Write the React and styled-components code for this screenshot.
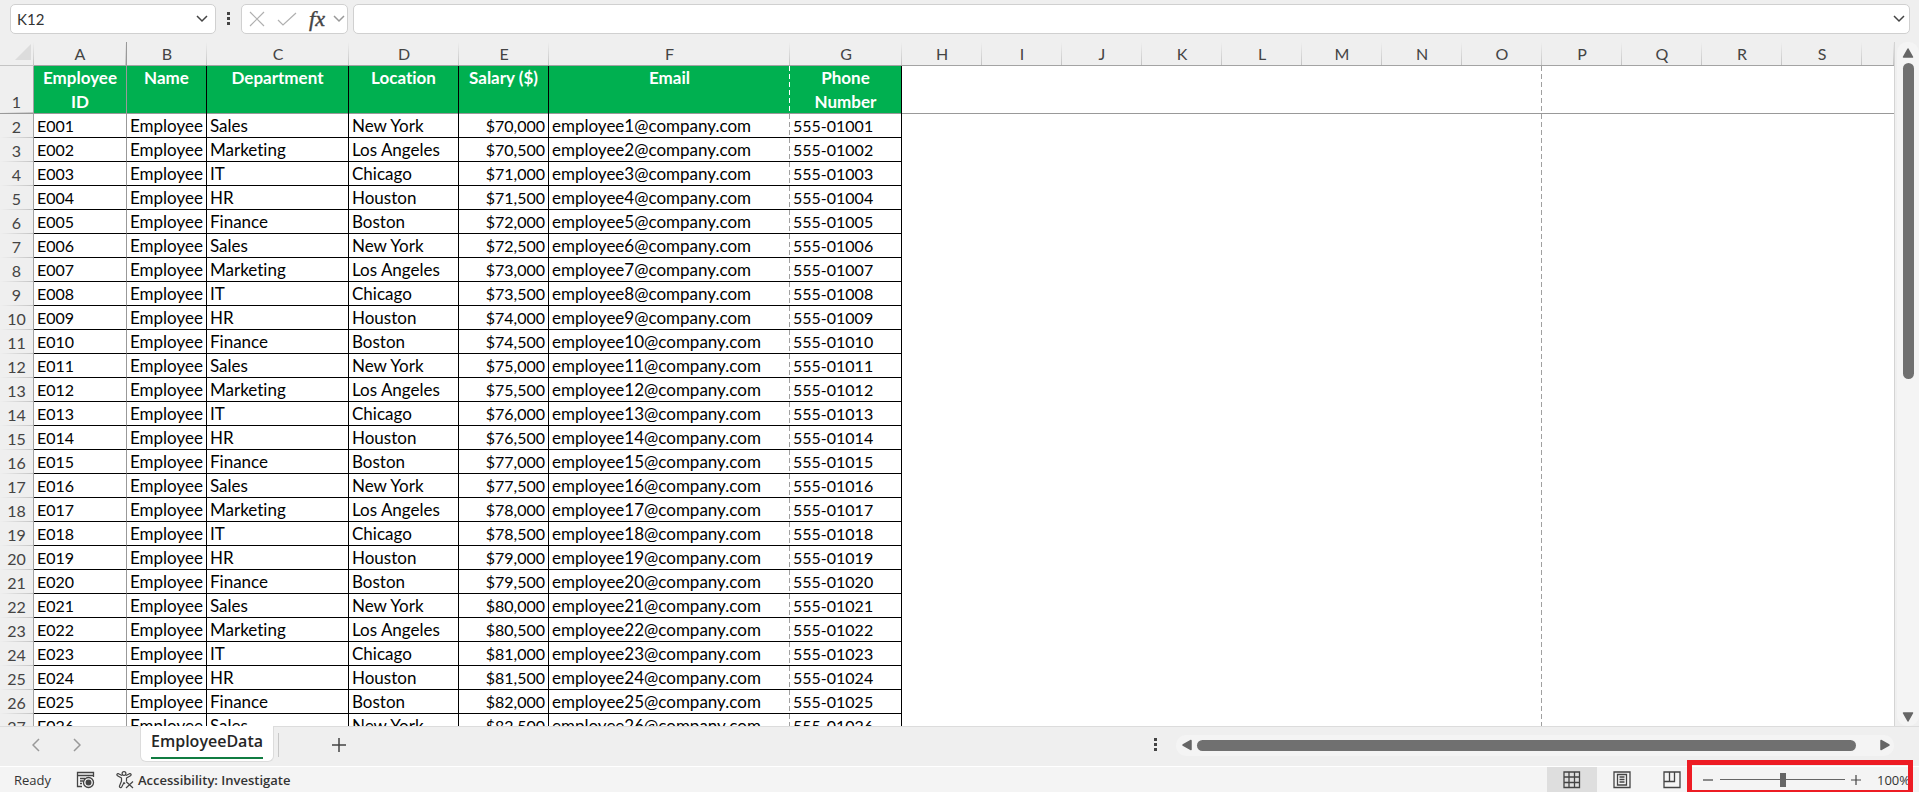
import React from "react";
import styled, { createGlobalStyle, css } from "styled-components";

const GRID_FONT = 'Lato, "Liberation Sans", sans-serif';
const UI_FONT = '"Open Sans", "Noto Sans", sans-serif';

const GlobalStyle = createGlobalStyle`
  * { box-sizing: border-box; }
  body { margin: 0; background: #efefef; font-family: ${UI_FONT}; }
  button { border: 0; padding: 0; background: none; color: inherit; font: inherit; }
`;

const Workbook = styled.div`
  display: flex;
  flex-direction: column;
  height: 100vh;
  overflow: hidden;
  background: #efefef;
`;

/* ---------- formula bar ---------- */

const FormulaBar = styled.header`
  display: flex;
  align-items: center;
  height: 42px;
  padding: 4px 9px 8px 10px;
`;

const field = css`
  display: flex;
  align-items: center;
  height: 30px;
  border: 1px solid #d0d0d0;
  border-radius: 5px;
  background: #fff;
`;

const NameBox = styled.div`
  ${field}
  width: 206px;
  padding-right: 6px;
`;

const NameInput = styled.input`
  flex: 1;
  min-width: 0;
  padding: 0 6px;
  border: 0;
  background: none;
  outline: none;
  color: #333;
  font: 15px ${GRID_FONT};
`;

const IconButton = styled.button`
  display: flex;
  align-items: center;
  justify-content: center;
  flex: none;
  width: ${(p) => p.$w || 20}px;
  height: ${(p) => p.$h || 24}px;
  color: ${(p) => p.$color || "#444"};
`;

const FormulaActions = styled.div`
  ${field}
  width: 107px;
  margin-right: 5px;
`;

const FormulaField = styled.div`
  ${field}
  flex: 1;
`;

/* ---------- sheet ---------- */

const SheetArea = styled.main`
  display: flex;
  flex: 1;
  min-height: 0;
`;

const SheetView = styled.div`
  flex: 1;
  min-width: 0;
  overflow: hidden;
  border-right: 1px solid #d4d4d4;
  background: #fff;
`;

const Grid = styled.table`
  width: 100%;
  table-layout: fixed;
  border-collapse: separate;
  border-spacing: 0;
  color: #000;
  font: 16px/23px ${GRID_FONT};
  font-variant-ligatures: none;
`;

const separator = (dir) => css`
  background: linear-gradient(${dir}, #efefef, #c4c4c4) right bottom /
    ${dir === "to bottom" ? "1px 100%" : "100% 1px"} no-repeat #efefef;
`;

const ColumnHeader = styled.th`
  height: 24px;
  padding: 0;
  border-bottom: 1px solid #a3a3a3;
  color: #444;
  font-weight: 400;
  line-height: 23px;
  ${separator("to bottom")}
  ${(p) => p.$frozen && css`border-right: 1px solid #999;`}
`;

const Corner = styled.td`
  height: 24px;
  padding: 0 3px 3px 0;
  border-bottom: 1px solid #c4c4c4;
  ${separator("to bottom")}
  svg { display: block; margin-left: auto; }
`;

const RowHeader = styled.th`
  height: ${(p) => (p.$first ? 48 : 24)}px;
  padding: 0;
  border-right: 1px solid #a3a3a3;
  color: #444;
  font-weight: 400;
  vertical-align: bottom;
  ${separator("to right")}
  ${(p) => p.$first && css`border-bottom: 1px solid #999;`}
`;

const pageBreak = (color) => css`
  border-right: 0;
  background-image: repeating-linear-gradient(
    to bottom, ${color} 0, ${color} 5px, transparent 5px, transparent 8px
  );
  background-position: right top;
  background-size: 1px 100%;
  background-repeat: no-repeat;
`;

const TitleCell = styled.th`
  height: 48px;
  padding: 0 4px;
  border-right: 1px solid ${(p) => (p.$frozen ? "#999" : "#000")};
  box-shadow: inset 0 -1px #999;
  background-color: #00b050;
  color: #fff;
  font-size: 17px;
  font-weight: 700;
  line-height: 24px;
  vertical-align: top;
  ${(p) => p.$pageBreak && pageBreak("#fff")}
`;

const DataCell = styled.td`
  height: 24px;
  padding: 0 3px;
  overflow: hidden;
  border-right: 1px solid ${(p) => (p.$frozen ? "#999" : "#000")};
  border-bottom: 1px solid #000;
  font-size: ${(p) => (p.$numeric ? 16 : 17)}px;
  text-align: ${(p) => (p.$right ? "right" : "left")};
  white-space: nowrap;
  ${(p) => p.$pageBreak && pageBreak("#a0a0a0")}
`;

const EmptyCell = styled.td`
  padding: 0;
  ${(p) => p.$first && css`border-bottom: 1px solid #999;`}
  ${(p) => p.$pageBreak && pageBreak("#a0a0a0")}
`;

/* ---------- scroll bars ---------- */

const VerticalScroll = styled.div`
  display: flex;
  flex-direction: column;
  align-items: center;
  width: 22px;
  margin-left: 2px;
  border-radius: 10px;
  background: #f4f4f4;
`;

const HorizontalScroll = styled.div`
  display: flex;
  align-items: center;
  width: 718px;
  max-width: 50%;
  height: 21px;
  margin-right: 25px;
  border-radius: 10px;
  background: #f4f4f4;
`;

const Rail = styled.div`
  flex: 1;
  min-width: 0;
  min-height: 0;
`;

const Thumb = styled.div`
  width: ${(p) => (p.$vertical ? "11px" : "97%")};
  height: ${(p) => (p.$vertical ? "49%" : "11px")};
  border-radius: 6px;
  background: #707070;
`;

/* ---------- tab strip ---------- */

const TabStrip = styled.nav`
  display: flex;
  align-items: center;
  flex: none;
  height: 40px;
  padding-bottom: 3px;
  border-top: 1px solid #dcdcdc;
`;

const TabNav = styled.div`
  display: flex;
  gap: 21px;
  width: 140px;
  padding-left: 26px;
`;

const SheetTab = styled.button`
  align-self: flex-start;
  height: 36px;
  margin-top: -1px;
  padding: 0 10px 2px;
  border: 1px solid #dcdcdc;
  border-top: 0;
  border-radius: 0 0 6px 6px;
  background: #fff;
  color: #262626;
  font-size: 16px;
  font-weight: 600;
  line-height: 31px;
`;

const TabLabel = styled.span`
  display: block;
  border-bottom: 2px solid #107c41;
`;

const TabDivider = styled.span`
  width: 1px;
  height: 24px;
  margin: 0 44px 0 4px;
  background: #c8c8c8;
`;

const Spacer = styled.div`
  flex: 1;
`;

/* ---------- status bar ---------- */

const StatusBar = styled.footer`
  position: relative;
  display: flex;
  align-items: center;
  flex: none;
  height: 26px;
  border-top: 1px solid #fff;
  background: #f4f4f4;
  color: #333;
  font-size: 13px;
`;

const Ready = styled.span`
  width: 75px;
  padding-left: 14px;
`;

const AccessibilityButton = styled.button`
  display: flex;
  align-items: center;
  gap: 4px;
  margin-left: 21px;
  font-weight: 600;
`;

const ViewButton = styled.button`
  display: flex;
  align-items: center;
  justify-content: center;
  width: 50px;
  height: 25px;
  background: ${(p) => (p.$active ? "#dedede" : "none")};
`;

const ZoomControls = styled.div`
  display: flex;
  align-items: center;
  width: 222px;
  padding-left: 1px;
`;

const ZoomSlider = styled.input`
  flex: none;
  width: 125px;
  height: 15px;
  margin: 0 1px 0 2px;
  appearance: none;
  background: linear-gradient(#666, #666) center / 100% 1px no-repeat;
  &::-webkit-slider-thumb {
    appearance: none;
    width: 6px;
    height: 14px;
    background: #666;
  }
`;

const ZoomValue = styled.button`
  margin-left: 11px;
`;

const ZoomHighlight = styled.div`
  position: absolute;
  top: -7px;
  right: 6px;
  width: 226px;
  height: 35px;
  border: 5px solid #ed1c24;
  pointer-events: none;
`;

/* ---------- drawings ---------- */

const Chevron = ({ d = "M1 1l5 5 5-5", w = 12, h = 8 }) => (
  <svg width={w} height={h} viewBox={`0 0 ${w} ${h}`} fill="none" stroke="currentColor" strokeWidth="1.5">
    <path d={d} />
  </svg>
);

const Dots = () => (
  <svg width="4" height="14" viewBox="0 0 4 14" fill="#444">
    <path d="M0 0h3v3H0zM0 5h3v3H0zM0 10h3v3H0z" />
  </svg>
);

const Arrow = ({ points }) => (
  <svg width="12" height="12" viewBox="0 0 12 12" fill="#666" stroke="#666" strokeWidth="1.5" strokeLinejoin="round">
    <polygon points={points} />
  </svg>
);

const Line = ({ d, size = 16, sw = 1.2 }) => (
  <svg width={size} height={size} viewBox={`0 0 ${size} ${size}`} fill="none" stroke="currentColor" strokeWidth={sw}>
    <path d={d} />
  </svg>
);

const FunctionGlyph = styled.span`
  font: italic 22px/24px "Liberation Serif", serif;
  -webkit-text-stroke: 0.4px #444;
`;

const MacroIcon = () => (
  <svg width="19" height="18" viewBox="0 0 19 18" fill="none" stroke="#444" strokeWidth="1.3">
    <path d="M6 15.5H1.500V1.500h16V6M1.500 4.500h16M4 7.500h5M4 10h3M4 12.500h2" />
    <circle cx="12.500" cy="11.500" r="5" />
    <circle cx="12.500" cy="11.500" r="2.300" fill="#444" />
  </svg>
);

const AccessibilityIcon = () => (
  <svg width="18" height="18" viewBox="0 0 18 18" fill="none" stroke="#444" strokeWidth="1.2" strokeLinejoin="round">
    <circle cx="8" cy="2.500" r="1.900" />
    <path d="M6 4.500L2.500 2.700C1 2.300.3 4 1.500 4.700L5.500 7v3L3.500 15c-.4 1.500 1.500 2.300 2.200 1L8 11.500l1 1.500M10 4.500l3.500-1.800c1.500-.4 2.200 1.300 1 2L10.500 7v3M10 10.500l7 6.500M17 10.500l-7 6.500" />
  </svg>
);

const NormalViewIcon = () => (
  <svg width="18" height="18" viewBox="0 0 18 18" fill="none" stroke="#444" strokeWidth="1.300">
    <path d="M1 1h15.500v15.500H1zM1 6h15.500M1 11.500h15.500M6 1v15.500M11.500 1v15.500" />
  </svg>
);

const LayoutViewIcon = () => (
  <svg width="18" height="18" viewBox="0 0 18 18" fill="none" stroke="#444" strokeWidth="1.300">
    <path d="M1 1h16v15.500H1zM4.500 3.500h9v10.500h-9zM6.500 6h5M6.500 8.500h5M6.500 11h5" />
  </svg>
);

const BreakViewIcon = () => (
  <svg width="18" height="18" viewBox="0 0 18 18" fill="none" stroke="#444" strokeWidth="1.300">
    <path d="M1 1h16v15.500H1zM1 10.500h10.500V1M6.500 1v9.500" />
  </svg>
);

/* ---------- data ---------- */

const columns = [
  { id: "A", width: 93, title: "Employee ID", frozen: true, numeric: true },
  { id: "B", width: 80, title: "Name" },
  { id: "C", width: 142, title: "Department" },
  { id: "D", width: 110, title: "Location" },
  { id: "E", width: 90, title: "Salary ($)", right: true, numeric: true },
  { id: "F", width: 241, title: "Email", pageBreak: true },
  { id: "G", width: 112, title: "Phone Number", numeric: true },
];
const emptyColumns = [..."HIJKLMNOPQRS"];
const departments = ["Sales", "Marketing", "IT", "HR", "Finance"];
const locations = ["New York", "Los Angeles", "Chicago", "Houston", "Boston"];

const rows = Array.from({ length: 26 }, (_, i) => {
  const n = i + 1;
  const nnn = String(n).padStart(3, "0");
  return [
    `E${nnn}`,
    "Employee",
    departments[i % 5],
    locations[i % 5],
    `$${(70000 + i * 500).toLocaleString("en-US")}`,
    `employee${n}@company.com`,
    `555-01${nnn}`,
  ];
});

const EmptyCells = ({ first }) => (
  <>
    {emptyColumns.map((c) => (
      <EmptyCell key={c} $first={first} $pageBreak={c === "O"} />
    ))}
    <EmptyCell $first={first} />
  </>
);

export default function App() {
  return (
    <Workbook>
      <GlobalStyle />
      <FormulaBar>
        <NameBox>
          <NameInput aria-label="Name box" defaultValue="K12" />
          <IconButton $w={14} aria-label="Open name list"><Chevron /></IconButton>
        </NameBox>
        <IconButton $w={25} aria-label="Resize name box"><Dots /></IconButton>
        <FormulaActions>
          <IconButton $w={30} $color="#b0b0b0" aria-label="Cancel"><Line d="M1 1l14 14M15 1L1 15" /></IconButton>
          <IconButton $w={30} $color="#b0b0b0" aria-label="Enter"><Line size={20} d="M1 11l5 5L19 4" /></IconButton>
          <IconButton $w={30} aria-label="Insert function"><FunctionGlyph>fx</FunctionGlyph></IconButton>
          <IconButton $w={14} $color="#999" aria-label="Function list"><Chevron /></IconButton>
        </FormulaActions>
        <FormulaField>
          <NameInput aria-label="Formula" />
          <IconButton aria-label="Expand formula bar"><Chevron /></IconButton>
        </FormulaField>
      </FormulaBar>

      <SheetArea>
        <SheetView>
          <Grid>
            <colgroup>
              <col width="34" />
              {columns.map((c) => <col key={c.id} width={c.width} />)}
              {emptyColumns.map((c) => <col key={c} width="80" />)}
              <col />
            </colgroup>
            <thead>
              <tr>
                <Corner>
                  <svg width="16" height="16" viewBox="0 0 16 16" fill="#dcdcdc"><path d="M16 0v16H0z" /></svg>
                </Corner>
                {columns.map((c) => <ColumnHeader key={c.id} $frozen={c.frozen}>{c.id}</ColumnHeader>)}
                {emptyColumns.map((c) => <ColumnHeader key={c}>{c}</ColumnHeader>)}
                <ColumnHeader />
              </tr>
            </thead>
            <tbody>
              <tr>
                <RowHeader $first>1</RowHeader>
                {columns.map((c) => (
                  <TitleCell key={c.id} $frozen={c.frozen} $pageBreak={c.pageBreak}>{c.title}</TitleCell>
                ))}
                <EmptyCells first />
              </tr>
              {rows.map((row, r) => (
                <tr key={row[0]}>
                  <RowHeader>{r + 2}</RowHeader>
                  {columns.map((c, i) => (
                    <DataCell
                      key={c.id}
                      $frozen={c.frozen}
                      $numeric={c.numeric}
                      $right={c.right}
                      $pageBreak={c.pageBreak}
                    >
                      {row[i]}
                    </DataCell>
                  ))}
                  <EmptyCells />
                </tr>
              ))}
            </tbody>
          </Grid>
        </SheetView>
        <VerticalScroll>
          <IconButton $h={21} aria-label="Scroll up"><Arrow points="6,2 10.500,10 1.500,10" /></IconButton>
          <Rail><Thumb $vertical /></Rail>
          <IconButton $h={18} aria-label="Scroll down"><Arrow points="6,10 10.500,2 1.500,2" /></IconButton>
        </VerticalScroll>
      </SheetArea>

      <TabStrip>
        <TabNav>
          <IconButton $color="#999" aria-label="Previous sheet"><Chevron w={8} h={14} d="M7 1L1 7l6 6" /></IconButton>
          <IconButton $color="#999" aria-label="Next sheet"><Chevron w={8} h={14} d="M1 1l6 6-6 6" /></IconButton>
        </TabNav>
        <SheetTab><TabLabel>EmployeeData</TabLabel></SheetTab>
        <TabDivider />
        <IconButton $w={32} aria-label="New sheet"><Line d="M8 1v14M1 8h14" sw={1.5} /></IconButton>
        <Spacer />
        <IconButton $w={40} aria-label="Resize tab strip"><Dots /></IconButton>
        <HorizontalScroll>
          <IconButton $w={21} aria-label="Scroll left"><Arrow points="2,6 10,1.500 10,10.500" /></IconButton>
          <Rail><Thumb /></Rail>
          <IconButton $w={18} aria-label="Scroll right"><Arrow points="10,6 2,1.500 2,10.500" /></IconButton>
        </HorizontalScroll>
      </TabStrip>

      <StatusBar>
        <Ready>Ready</Ready>
        <IconButton aria-label="Record macro"><MacroIcon /></IconButton>
        <AccessibilityButton><AccessibilityIcon />Accessibility: Investigate</AccessibilityButton>
        <Spacer />
        <ViewButton $active aria-label="Normal view"><NormalViewIcon /></ViewButton>
        <ViewButton aria-label="Page layout view"><LayoutViewIcon /></ViewButton>
        <ViewButton aria-label="Page break preview"><BreakViewIcon /></ViewButton>
        <ZoomControls>
          <IconButton aria-label="Zoom out"><Line size={12} d="M1 6h10" /></IconButton>
          <ZoomSlider type="range" min="0" max="100" defaultValue="50" aria-label="Zoom" />
          <IconButton aria-label="Zoom in"><Line size={12} d="M1 6h10M6 1v10" /></IconButton>
          <ZoomValue>100%</ZoomValue>
        </ZoomControls>
        <ZoomHighlight />
      </StatusBar>
    </Workbook>
  );
}
